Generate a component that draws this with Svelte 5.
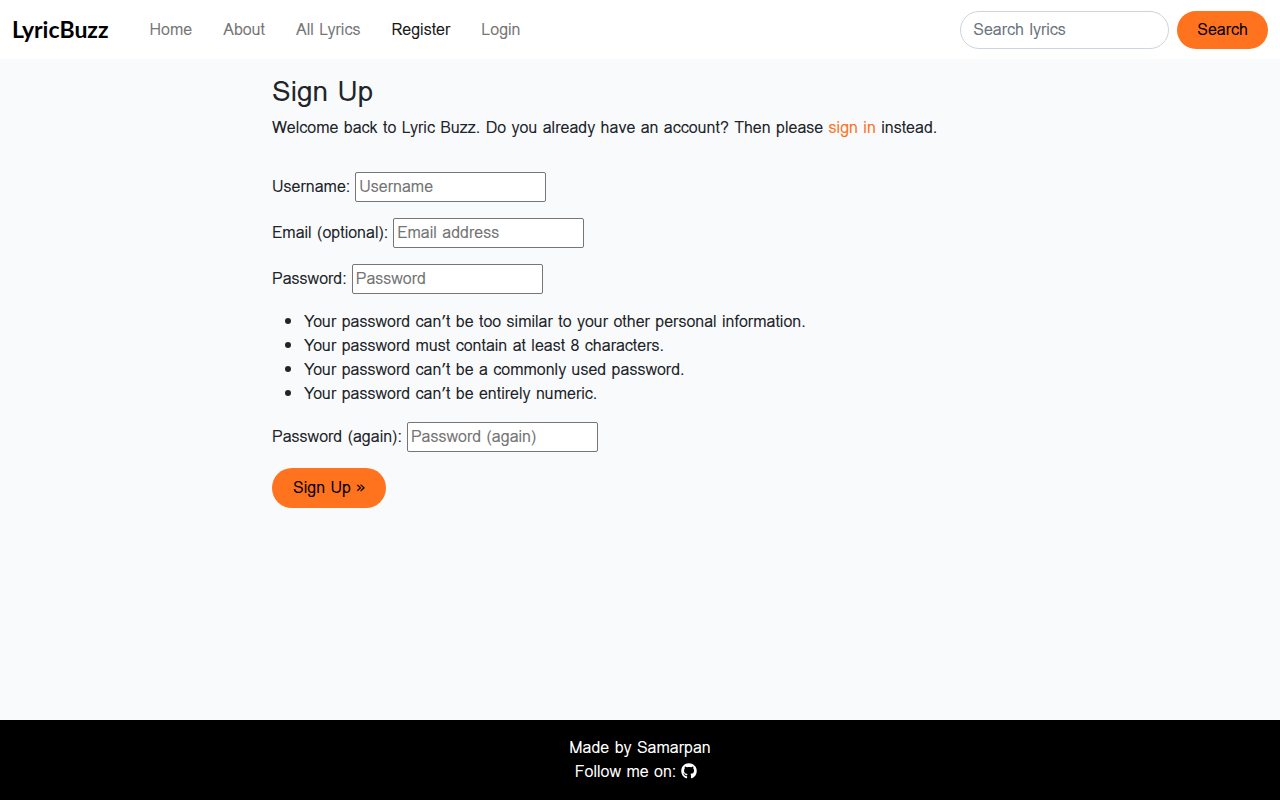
<script>
  const links = ['Home', 'About', 'All Lyrics', 'Register', 'Login'];
  const rules = [
    'Your password can’t be too similar to your other personal information.',
    'Your password must contain at least 8 characters.',
    'Your password can’t be a commonly used password.',
    'Your password can’t be entirely numeric.'
  ];
</script>

<div class="page">
  <header>
    <a class="brand" href="#home">LyricBuzz</a>
    <nav>
      {#each links as link}
        <a href="#{link}" class:active={link === 'Register'}>{link}</a>
      {/each}
    </nav>
    <form class="search">
      <input type="search" placeholder="Search lyrics" aria-label="Search lyrics" />
      <button type="submit">Search</button>
    </form>
  </header>

  <main>
    <h1>Sign Up</h1>
    <p class="intro">Welcome back to Lyric Buzz. Do you already have an account? Then please <a href="#login">sign in</a> instead.</p>
    <form class="signup">
      <div class="field">
        <label for="username">Username:</label>
        <input id="username" type="text" placeholder="Username" />
      </div>
      <div class="field">
        <label for="email">Email (optional):</label>
        <input id="email" type="email" placeholder="Email address" />
      </div>
      <div class="field">
        <label for="password">Password:</label>
        <input id="password" type="password" placeholder="Password" />
      </div>
      <ul>
        {#each rules as rule}
          <li>{rule}</li>
        {/each}
      </ul>
      <div class="field">
        <label for="password2">Password (again):</label>
        <input id="password2" type="password" placeholder="Password (again)" />
      </div>
      <button type="submit">Sign Up »</button>
    </form>
  </main>

  <footer>
    <div>Made by Samarpan</div>
    <div class="follow">
      <span>Follow me on:</span>
      <a href="#github" aria-label="GitHub">
        <svg viewBox="0 0 496 512" width="16" height="16" fill="currentColor" aria-hidden="true">
          <path d="M165.900 397.400c0 2-2.300 3.600-5.200 3.600-3.300.3-5.600-1.300-5.600-3.600 0-2 2.300-3.600 5.200-3.600 3-.3 5.600 1.300 5.600 3.600zM244.800 8C106.100 8 0 113.300 0 252c0 110.900 69.800 205.800 169.500 239.200 12.800 2.300 17.300-5.600 17.300-12.100 0-6.200-.3-40.400-.3-61.400 0 0-70 15-84.700-29.800 0 0-11.400-29.100-27.800-36.600 0 0-22.900-15.700 1.600-15.400 0 0 24.900 2 38.600 25.800 21.900 38.600 58.600 27.500 72.900 20.900 2.300-16 8.800-27.100 16-33.700-55.900-6.200-112.300-14.300-112.300-110.500 0-27.500 7.600-41.300 23.600-58.900-2.600-6.500-11.100-33.300 2.600-67.900 20.900-6.500 69 27 69 27 20-5.600 41.500-8.500 62.800-8.500s42.800 2.900 62.800 8.500c0 0 48.100-33.600 69-27 13.700 34.700 5.200 61.400 2.600 67.900 16 17.700 25.800 31.500 25.800 58.900 0 96.500-58.900 104.200-114.800 110.500 9.200 7.900 17 22.900 17 46.400 0 33.700-.3 75.400-.3 83.600 0 6.500 4.600 14.400 17.300 12.100C428.200 457.800 496 362.900 496 252 496 113.300 383.500 8 244.800 8z" />
        </svg>
      </a>
    </div>
  </footer>
</div>

<style>
  :global(body) {
    margin: 0;
    background: #f9fafc;
  }

  .page {
    display: flex;
    flex-direction: column;
    min-height: 100vh;
    color: #212529;
    font: 16px/24px Loma, "Liberation Sans", Arial, sans-serif;
  }

  .page * {
    box-sizing: border-box;
  }

  a {
    color: #ff731f;
    text-decoration: none;
  }

  input,
  button {
    margin: 0;
    font: inherit;
  }

  button {
    border: 0;
    border-radius: 20px;
    background: #ff731f;
    color: #000;
    cursor: pointer;
  }

  header {
    display: flex;
    align-items: center;
    padding: 11px 12px 10px;
    background: #fff;
  }

  .brand {
    margin-right: 41px;
    padding-bottom: 2px;
    color: #000;
    font: 700 23px/36px Lato, sans-serif;
  }

  nav {
    display: flex;
    flex: 1;
    gap: 31px;
  }

  nav a {
    color: #777;
  }

  nav a.active {
    color: #1a1a1a;
  }

  .search {
    display: flex;
    gap: 8px;
  }

  .search input {
    width: 209px;
    height: 38px;
    padding: 5px 12px 7px;
    border: 1px solid #ced4da;
    border-radius: 20px;
    background: #fff;
    appearance: none;
  }

  .search input::placeholder {
    color: #6c757d;
    opacity: 1;
  }

  .search button {
    height: 38px;
    padding: 0 20px;
  }

  main {
    flex: 1;
    width: 100%;
    max-width: 768px;
    margin: 0 auto;
    padding: 16px;
  }

  h1 {
    margin: 0 0 8px;
    font-size: 28px;
    font-weight: 400;
    line-height: 33px;
  }

  .intro {
    margin: 0 0 32px;
  }

  .field {
    display: flex;
    align-items: center;
    gap: 5px;
    margin-bottom: 16px;
  }

  .field input {
    width: 191px;
    height: 30px;
    padding: 0 3px 2px;
    border: 1px solid #767676;
    border-radius: 2px;
    background: #fff;
  }

  .field input::placeholder {
    color: #757575;
    opacity: 1;
  }

  ul {
    margin: 0 0 16px;
    padding-left: 32px;
  }

  .signup button {
    height: 40px;
    padding: 0 21px;
  }

  footer {
    padding: 16px;
    background: #000;
    color: #fff;
    text-align: center;
  }

  .follow {
    display: flex;
    justify-content: center;
    gap: 5px;
    padding-right: 8px;
  }

  .follow a {
    display: flex;
    align-items: center;
    padding-bottom: 2px;
    color: #fff;
  }
</style>
